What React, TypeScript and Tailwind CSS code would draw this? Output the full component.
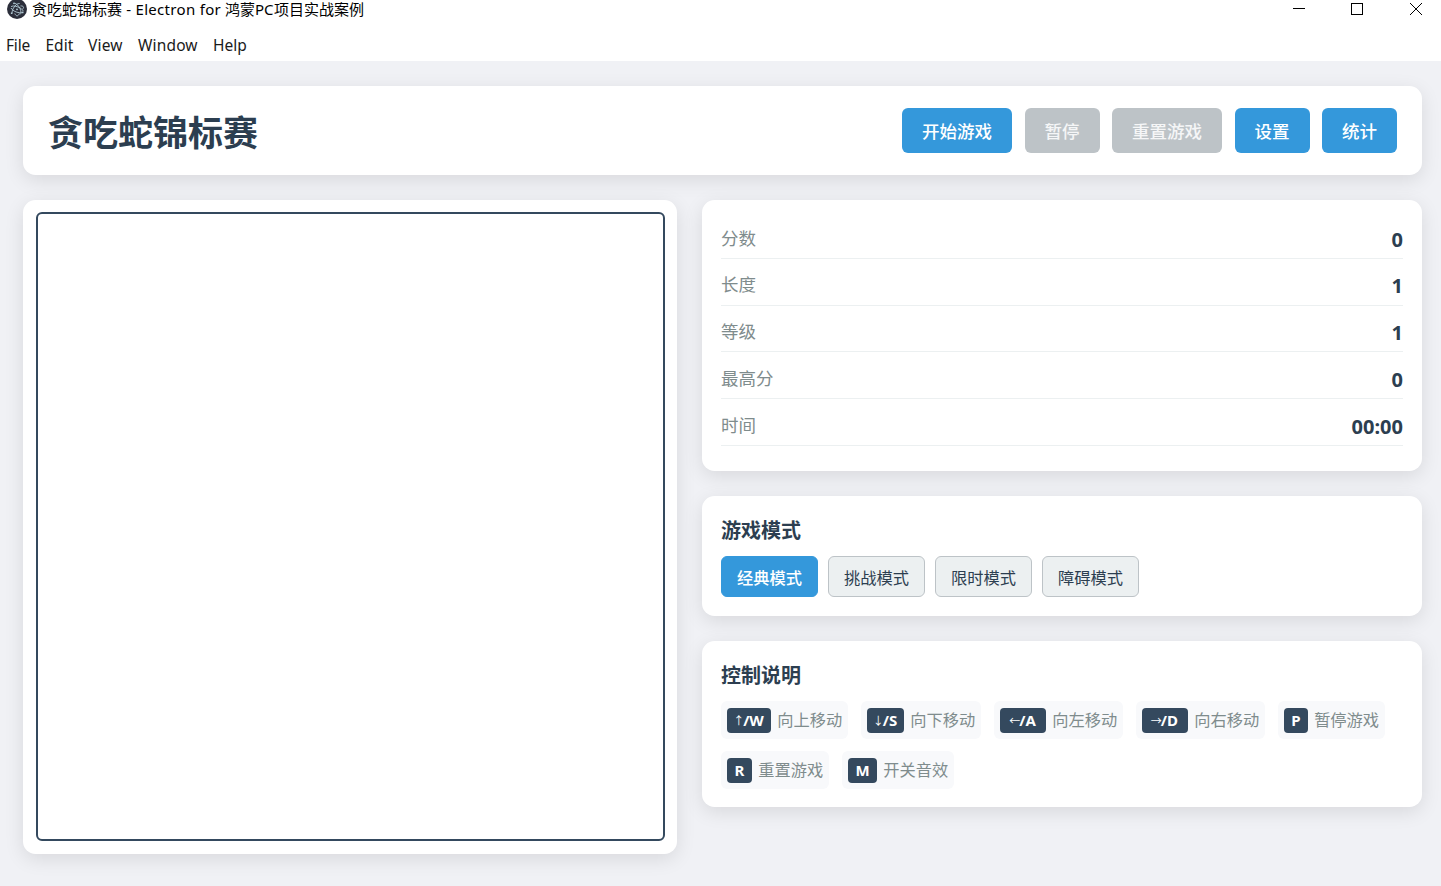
import { clsx } from "clsx";

const actions = [
  { label: "开始游戏", width: "w-[110px]", disabled: false },
  { label: "暂停", width: "w-[75px]", disabled: true },
  { label: "重置游戏", width: "w-[110px]", disabled: true },
  { label: "设置", width: "w-[75px]", disabled: false },
  { label: "统计", width: "w-[75px]", disabled: false },
];

const stats = [
  { label: "分数", value: "0" },
  { label: "长度", value: "1" },
  { label: "等级", value: "1" },
  { label: "最高分", value: "0" },
  { label: "时间", value: "00:00" },
];

const modes = ["经典模式", "挑战模式", "限时模式", "障碍模式"];

const controls = [
  { arrow: "↑", name: "/W", label: "向上移动", width: "w-[44px]" },
  { arrow: "↓", name: "/S", label: "向下移动", width: "w-[37px]" },
  { arrow: "←", name: "/A", label: "向左移动", width: "w-[46px]" },
  { arrow: "→", name: "/D", label: "向右移动", width: "w-[46px]" },
  { arrow: "", name: "P", label: "暂停游戏", width: "w-[24px]" },
  { arrow: "", name: "R", label: "重置游戏", width: "w-[25px]" },
  { arrow: "", name: "M", label: "开关音效", width: "w-[29px]" },
];

const card = "bg-white rounded-[12.5px] shadow-[0_5px_19px_rgba(0,0,0,0.1)]";

const ElectronIcon = () => (
  <svg className="h-5 w-5 shrink-0" viewBox="0 0 20 20" fill="none">
    <circle cx="10" cy="10" r="10" fill="#2b2e3a" />
    <g stroke="#b4ccd6" strokeWidth="0.9">
      <path d="M4 7.9c.6-1.2 3.6-1.2 6.8 0c2.9 1 5.2 2.8 5.4 4.3" />
      <path d="M7.7 4.3c1.5.1 3.9 2.4 5.3 5.3c1.2 2.7 1.3 5 .2 5.8" />
      <path d="M12.6 4.5c-1.7-.4-4.3 1.5-6.1 4.5c-1.1 1.9-1.5 3.7-1.2 4.7" />
      <path d="M4 9c.8 1.6 2.8 3.1 5.3 4c2.2.8 4.3.9 5.5.5" />
      <path d="M7.8 14.5c.6 1.5 1.5 2.3 2.3 2.3c.9 0 1.700-.9 2.300-2.400" />
      <path d="M13.5 6.9c1.7 0 2.7.4 3 1.1c.2.6-.2 1.3-1 2.1" />
    </g>
    <g fill="#b4ccd6">
      <circle cx="10" cy="10.3" r="0.9" />
      <circle cx="7" cy="4.3" r="0.9" />
      <circle cx="4.7" cy="14.2" r="0.9" />
      <circle cx="15.7" cy="13.4" r="0.9" />
    </g>
  </svg>
);

const TitleBar = () => (
  <div className="flex h-[30px] items-start justify-between">
    <div className="flex items-start pl-[7px]">
      <div className="-mt-px">
        <ElectronIcon />
      </div>
      <div className="-mt-px ml-[5px] flex h-5 items-center whitespace-pre text-[15px] text-black">
        <span>贪吃蛇锦标赛</span>
        <span className="w-[103px] tracking-[0.3px]"> - Electron for</span>
        <span>鸿蒙</span>
        <span className="w-[19px]">PC</span>
        <span>项目实战案例</span>
      </div>
    </div>
    <svg
      className="mr-[18px] mt-[2px] h-[14px] w-[131px]"
      viewBox="0 0 131 14"
      fill="none"
      stroke="black"
      shapeRendering="crispEdges"
    >
      <path d="M1 6.5h12" />
      <rect x="59.5" y="1.5" width="11" height="11" />
      <path d="M118 1l12 12M130 1l-12 12" shapeRendering="auto" />
    </svg>
  </div>
);

const MenuBar = () => (
  <div className="flex h-[31px] items-center text-[15.5px] text-[#1a1a1a]">
    <span className="ml-[6px] w-[39.5px] tracking-[-0.2px]">File</span>
    <span className="w-[42.5px]">Edit</span>
    <span className="w-[50px] tracking-[0.2px]">View</span>
    <span className="w-[75px] tracking-[0.15px]">Window</span>
    <span>Help</span>
  </div>
);

const App = () => {
  return (
    <div className="h-[886px] w-[1441px] overflow-hidden bg-[#f0f1f5] font-['Noto_Sans','Noto_Sans_CJK_SC',sans-serif] text-[#2c3e50]">
      {/* Window chrome */}
      <div className="h-[61px] bg-white">
        <TitleBar />
        <MenuBar />
      </div>

      <main className="pl-[23px] pr-[19px] pt-[25px]">
        {/* Header */}
        <header className={clsx(card, "flex h-[89px] items-center justify-between px-[25px]")}>
          <h1 className="pt-1 text-[35px] font-bold leading-none">贪吃蛇锦标赛</h1>
          <div className="flex gap-[12.5px]">
            {actions.map((action) => (
              <button
                key={action.label}
                className={clsx(
                  "h-[45px] rounded-[6px] pt-[2px] text-[17.5px] font-medium leading-none",
                  action.width,
                  action.disabled ? "bg-[#bdc3c7] text-white/85" : "bg-[#3498db] text-white"
                )}
              >
                {action.label}
              </button>
            ))}
          </div>
        </header>

        <div className="mt-[25px] flex items-start gap-[25px]">
          {/* Game board */}
          <section className={clsx(card, "h-[654px] w-[654px] pl-[13px] pt-3")}>
            <div className="h-[629px] w-[629px] rounded-[6px] border-2 border-[#34495e]"></div>
          </section>

          <aside className="flex w-[720px] flex-col gap-[25px]">
            {/* Stats */}
            <section className={clsx(card, "h-[271px] px-[19px] pt-[18.75px]")}>
              {stats.map((stat) => (
                <div
                  key={stat.label}
                  className="mb-[6.25px] flex h-[40.4px] items-center justify-between border-b border-[#ecf0f1] last:pt-[0.8px]"
                >
                  <span className="pt-[0.3px] text-[17.5px] leading-none text-[#7f8c8d]">{stat.label}</span>
                  <span className="pt-[2.7px] text-[20px] font-bold leading-none">{stat.value}</span>
                </div>
              ))}
            </section>

            {/* Game modes */}
            <section className={clsx(card, "h-[120px] px-[19px] pt-[19px]")}>
              <h3 className="h-[41px] pt-[6px] text-[20px] font-bold leading-[20px]">游戏模式</h3>
              <div className="flex gap-[10px]">
                {modes.map((mode, i) => (
                  <button
                    key={mode}
                    className={clsx(
                      "h-[41px] w-[97px] rounded-[6px] border pt-[4px] text-[16.25px] leading-none",
                      i === 0
                        ? "border-[#3498db] bg-[#3498db] font-medium text-white"
                        : "border-[#bdc3c7] bg-[#ecf0f1]"
                    )}
                  >
                    {mode}
                  </button>
                ))}
              </div>
            </section>

            {/* Controls */}
            <section className={clsx(card, "h-[166px] px-[19px] pt-[19px]")}>
              <h3 className="h-[41px] pt-[6px] text-[20px] font-bold leading-[20px]">控制说明</h3>
              <div className="flex flex-wrap gap-x-[12.8px] gap-y-3">
                {controls.map((control) => (
                  <div
                    key={control.label}
                    className="flex h-[38px] items-center rounded-[6px] bg-[#f8f9fb] px-[6px]"
                  >
                    <kbd
                      className={clsx(
                        "mr-[6.2px] flex h-[25px] items-center justify-center rounded-[4px] bg-[#34495e] pt-px font-['Noto_Sans','Noto_Sans_CJK_SC',sans-serif] text-[15px] font-bold leading-none text-white",
                        control.width
                      )}
                    >
                      {control.arrow && (
                        <span className="flex w-[9px] justify-center font-['Noto_Sans_CJK_SC'] text-[11px] font-normal">
                          {control.arrow}
                        </span>
                      )}
                      {control.name}
                    </kbd>
                    <span className="pt-px text-[16.25px] leading-none text-[#7f8c8d]">{control.label}</span>
                  </div>
                ))}
              </div>
            </section>
          </aside>
        </div>
      </main>
    </div>
  );
};

export default App;
